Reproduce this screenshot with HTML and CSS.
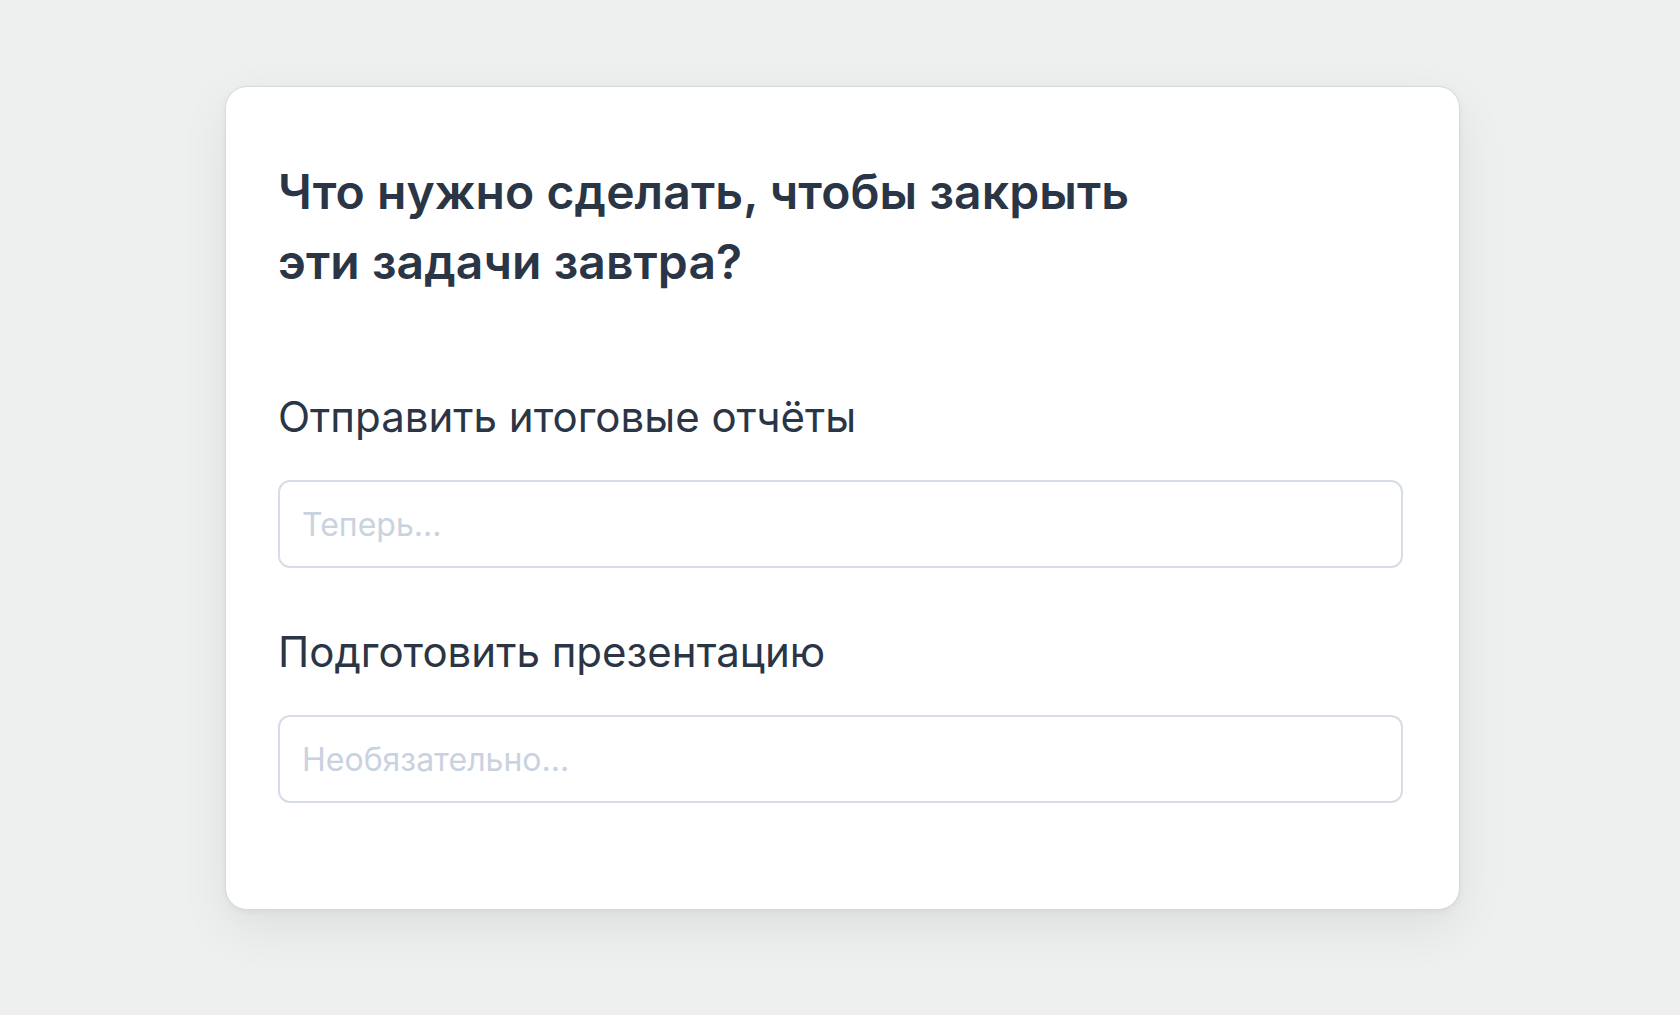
FILE: index.html
```html
<!DOCTYPE html>
<html lang="ru">
<head>
<meta charset="utf-8">
<title>Задачи</title>
<link rel="stylesheet" href="styles.css">
</head>
<body>
<div class="page">
  <div class="card">
    <h1 class="title">Что нужно сделать, чтобы закрыть<br>эти задачи завтра?</h1>
    <div class="field">
      <label class="label" for="t1">Отправить итоговые отчёты</label>
      <input class="input" id="t1" type="text" placeholder="Теперь...">
    </div>
    <div class="field">
      <label class="label" for="t2">Подготовить презентацию</label>
      <input class="input" id="t2" type="text" placeholder="Необязательно...">
    </div>
  </div>
</div>
</body>
</html>
```

FILE: styles.css
```css
html, body {
  margin: 0;
  padding: 0;
  min-height: 100vh;
}
body {
  background: #eef0ef;
  font-family: Inter, "Noto Sans", sans-serif;
  color: #2a3546;
}
.page {
  box-sizing: border-box;
  min-height: 100vh;
  padding: 86px 0 0 225px;
}
.card {
  width: 1235px;
  height: 824px;
  box-sizing: border-box;
  background: #ffffff;
  border: 1px solid #d6d9dd;
  border-radius: 22px;
  box-shadow: 0 18px 50px rgba(0, 0, 0, 0.07), 0 2px 6px rgba(0, 0, 0, 0.05);
  padding: 70px 56px 0 52px;
}
.title {
  margin: 0;
  font-size: 48px;
  line-height: 70px;
  font-weight: 600;
  letter-spacing: 0.1px;
}
.field {
  display: flex;
  flex-direction: column;
  gap: 38px;
}
.title + .field {
  margin-top: 95px;
}
.field + .field {
  margin-top: 59px;
}
.label {
  font-size: 42px;
  line-height: 50px;
  font-weight: 400;
}
.input {
  box-sizing: border-box;
  width: 100%;
  height: 88px;
  border: 2px solid #d6dde7;
  border-radius: 12px;
  padding: 0 22px;
  font-family: Inter, "Noto Sans", sans-serif;
  font-size: 32px;
  color: #2a3546;
  background: #fff;
  outline: none;
}
.input::placeholder {
  color: #c9d2df;
}
```
